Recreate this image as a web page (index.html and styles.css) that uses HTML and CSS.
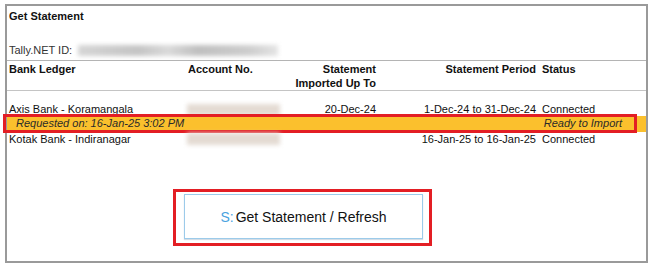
FILE: index.html
```html
<!DOCTYPE html>
<html lang="en">
<head>
    <meta charset="UTF-8">
    <meta name="viewport" content="width=device-width, initial-scale=1.0">
    <title>Get Statement</title>
    <link rel="stylesheet" href="styles.css">
</head>
<body>
    <div class="panel">
        <div class="title">Get Statement</div>

        <div class="netid">
            <span>Tally.NET ID:</span>
            <span class="blur netid-blur"></span>
        </div>

        <div class="grid head">
            <div>Bank Ledger</div>
            <div class="acct">Account No.</div>
            <div class="right">Statement<br>Imported Up To</div>
            <div class="right">Statement Period</div>
            <div class="status">Status</div>
        </div>

        <div class="rows">
            <div class="grid row">
                <div>Axis Bank - Koramangala</div>
                <div><span class="blur acct-blur"></span></div>
                <div class="right">20-Dec-24</div>
                <div class="right">1-Dec-24 to 31-Dec-24</div>
                <div class="status">Connected</div>
            </div>
            <div class="request">
                <span>Requested on: 16-Jan-25 3:02 PM</span>
                <span>Ready to Import</span>
            </div>
            <div class="grid row">
                <div>Kotak Bank - Indiranagar</div>
                <div><span class="blur acct-blur"></span></div>
                <div class="right"></div>
                <div class="right">16-Jan-25 to 16-Jan-25</div>
                <div class="status">Connected</div>
            </div>
        </div>

        <div class="action">
            <button class="btn" type="button"><span class="key">S:</span>Get Statement / Refresh</button>
        </div>
    </div>
</body>
</html>
```

FILE: styles.css
```css
body {
    margin: 0;
    background-color: #fff;
    font-family: "Liberation Sans", Arial, sans-serif;
    font-size: 11px;
    color: #111;
}

.panel {
    box-sizing: border-box;
    width: 643px;
    height: 259px;
    margin: 4px 0 0 5px;
    border: 2px solid #9a9a9a;
}

.title {
    padding: 3px 0 0 2px;
    line-height: 14px;
    font-weight: bold;
}

.netid {
    display: flex;
    align-items: center;
    margin: 20px 0 3px;
    padding-left: 2px;
    height: 14px;
    line-height: 14px;
    color: #333;
}

/* размытые поля с номерами */
.blur {
    display: block;
    filter: blur(2px);
}

.netid-blur {
    width: 200px;
    height: 11px;
    margin-left: 6px;
    background: linear-gradient(90deg, #d6d6d6, #c4c4c4 30%, #dadada 45%, #bfbfbf 60%, #cdcdcd 85%, #e4e4e4);
}

.acct-blur {
    width: 93px;
    height: 12px;
    margin-left: 1px;
    background-color: #e4dbd3;
}

.grid {
    display: grid;
    grid-template-columns: 177px 95px 95px 160px 1fr;
    padding-left: 2px;
}

.head {
    border-top: 1px solid #b4b4b4;
    border-bottom: 1px solid #c4c4c4;
    padding-top: 1px;
    line-height: 14px;
    font-weight: bold;
}

.acct {
    padding-left: 2px;
}

.right {
    text-align: right;
}

.status {
    padding-left: 6px;
}

.rows {
    margin-top: 12px;
}

.row {
    height: 14px;
    line-height: 14px;
    align-items: center;
}

.row:first-child {
    height: 13px;
    line-height: 13px;
}

.request {
    position: relative;
    display: flex;
    justify-content: space-between;
    height: 16px;
    padding: 0 24px 0 9px;
    line-height: 14px;
    background-color: #fbc02d;
    font-style: italic;
    color: #2a2a2a;
}

/* красная рамка-выделение */
.request::after {
    content: "";
    position: absolute;
    left: -4px;
    right: 9px;
    top: -2px;
    bottom: -1px;
    border: 3px solid #e31e24;
}

.action {
    display: inline-block;
    margin: 43px 0 0 166px;
    padding: 2px 6px 4px 8px;
    border: 3px solid #e31e24;
}

.btn {
    display: block;
    width: 239px;
    height: 45px;
    padding: 0;
    background-color: #fff;
    border: 1px solid #9ccbea;
    box-shadow: 0 1px 1px #d4dde6;
    font-family: "Liberation Sans", Arial, sans-serif;
    font-size: 14px;
    color: #111;
    cursor: pointer;
}

.key {
    color: #4aa3df;
    margin-right: 2px;
}
```
